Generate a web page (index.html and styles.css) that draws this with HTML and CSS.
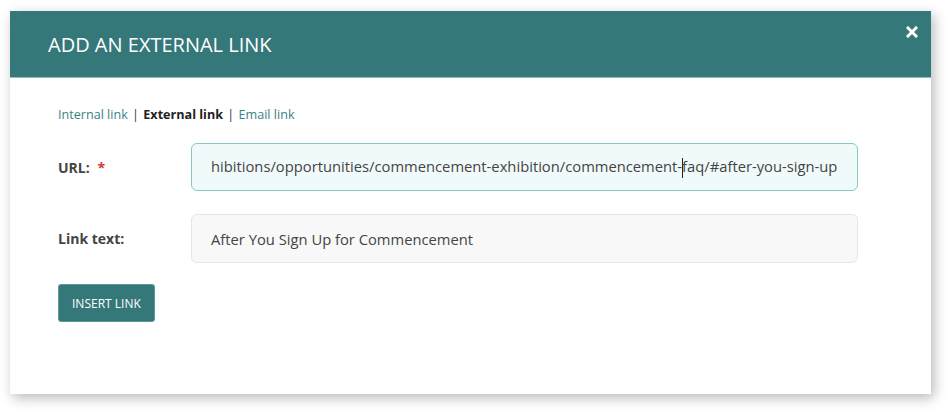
FILE: index.html
```html
<!DOCTYPE html>
<html lang="en">
<head>
    <meta charset="UTF-8">
    <meta name="viewport" content="width=device-width, initial-scale=1.0">
    <title>Add an external link</title>
    <link rel="stylesheet" href="styles.css">
</head>
<body>
    <div class="modal">
        <!-- Header -->
        <div class="modal-header">
            <h2>Add an external link</h2>
            <button class="close-button" aria-label="Close">
                <svg width="12" height="12" viewBox="0 0 12 12">
                    <path d="M2 2 L10 10 M10 2 L2 10" stroke="#fff" stroke-width="3" stroke-linecap="square"/>
                </svg>
            </button>
        </div>

        <!-- Body -->
        <div class="modal-body">
            <div class="link-types">
                <a href="#">Internal link</a>
                <span class="sep">|</span>
                <strong>External link</strong>
                <span class="sep">|</span>
                <a href="#">Email link</a>
            </div>

            <div class="field">
                <label>URL: <span class="required">*</span></label>
                <div class="input focused">
                    <span class="input-text">hibitions/opportunities/commencement-exhibition/commencement-<span class="caret"></span>faq/#after-you-sign-up</span>
                </div>
            </div>

            <div class="field">
                <label>Link text:</label>
                <div class="input">
                    <span class="input-text">After You Sign Up for Commencement</span>
                </div>
            </div>

            <button class="insert-button">Insert link</button>
        </div>
    </div>
</body>
</html>
```

FILE: styles.css
```css
/* Global Styles */
body {
    font-family: 'Open Sans', sans-serif;
    margin: 0;
    padding: 11px 20px 20px 10px;
    background-color: #fff;
    color: #333;
}

/* Modal */
.modal {
    width: 921px;
    height: 383px;
    background: #fff;
    box-shadow: 3px 4px 12px rgba(0, 0, 0, 0.28);
    display: flex;
    flex-direction: column;
}

.modal-header {
    height: 67px;
    background-color: #35787a;
    display: flex;
    align-items: center;
    justify-content: space-between;
    padding: 0 13px 0 38px;
    border-bottom: 1px solid #8cc0c0;
    box-sizing: border-box;
}

.modal-header h2 {
    margin: 0;
    font-size: 20px;
    font-weight: 500;
    color: #fff;
    text-transform: uppercase;
}

.close-button {
    align-self: flex-start;
    margin-top: 15px;
    background: none;
    border: none;
    padding: 0;
    width: 12px;
    height: 12px;
    cursor: pointer;
}

.close-button svg {
    display: block;
}

.modal-body {
    padding: 28px 73px 0 48px;
}

/* Link types */
.link-types {
    font-size: 12.6px;
    color: #333;
    margin-bottom: 20px;
}

.link-types a {
    color: #3a8284;
    text-decoration: none;
}

.link-types strong {
    font-weight: 700;
    color: #222;
}

.link-types .sep {
    margin: 0 1px;
}

/* Fields */
.field {
    display: flex;
    align-items: center;
    margin-bottom: 23px;
}

.field label {
    width: 133px;
    font-size: 14px;
    font-weight: 700;
    color: #444;
}

.required {
    color: #cf3a3a;
    margin-left: 4px;
}

.input {
    flex: 1;
    height: 49px;
    box-sizing: border-box;
    border: 1px solid #e6e6e6;
    background: #f8f8f8;
    border-radius: 6px;
    padding: 0 19px;
    display: flex;
    align-items: center;
    overflow: hidden;
    white-space: nowrap;
}

.input.focused {
    border-color: #86c7c6;
    background: #f1fafa;
    height: 48px;
}

.input-text {
    font-size: 14.75px;
    color: #444;
}

.caret {
    display: inline-block;
    width: 1px;
    height: 20px;
    background: #222;
    vertical-align: middle;
    margin-right: -1px;
}

/* Button */
.insert-button {
    margin-top: -2px;
    height: 38px;
    padding: 0 13px;
    background: #35787a;
    color: #fff;
    border: 1px solid #5a9a9b;
    border-radius: 3px;
    font-family: 'Open Sans', sans-serif;
    font-size: 12px;
    text-transform: uppercase;
    cursor: pointer;
}
```
